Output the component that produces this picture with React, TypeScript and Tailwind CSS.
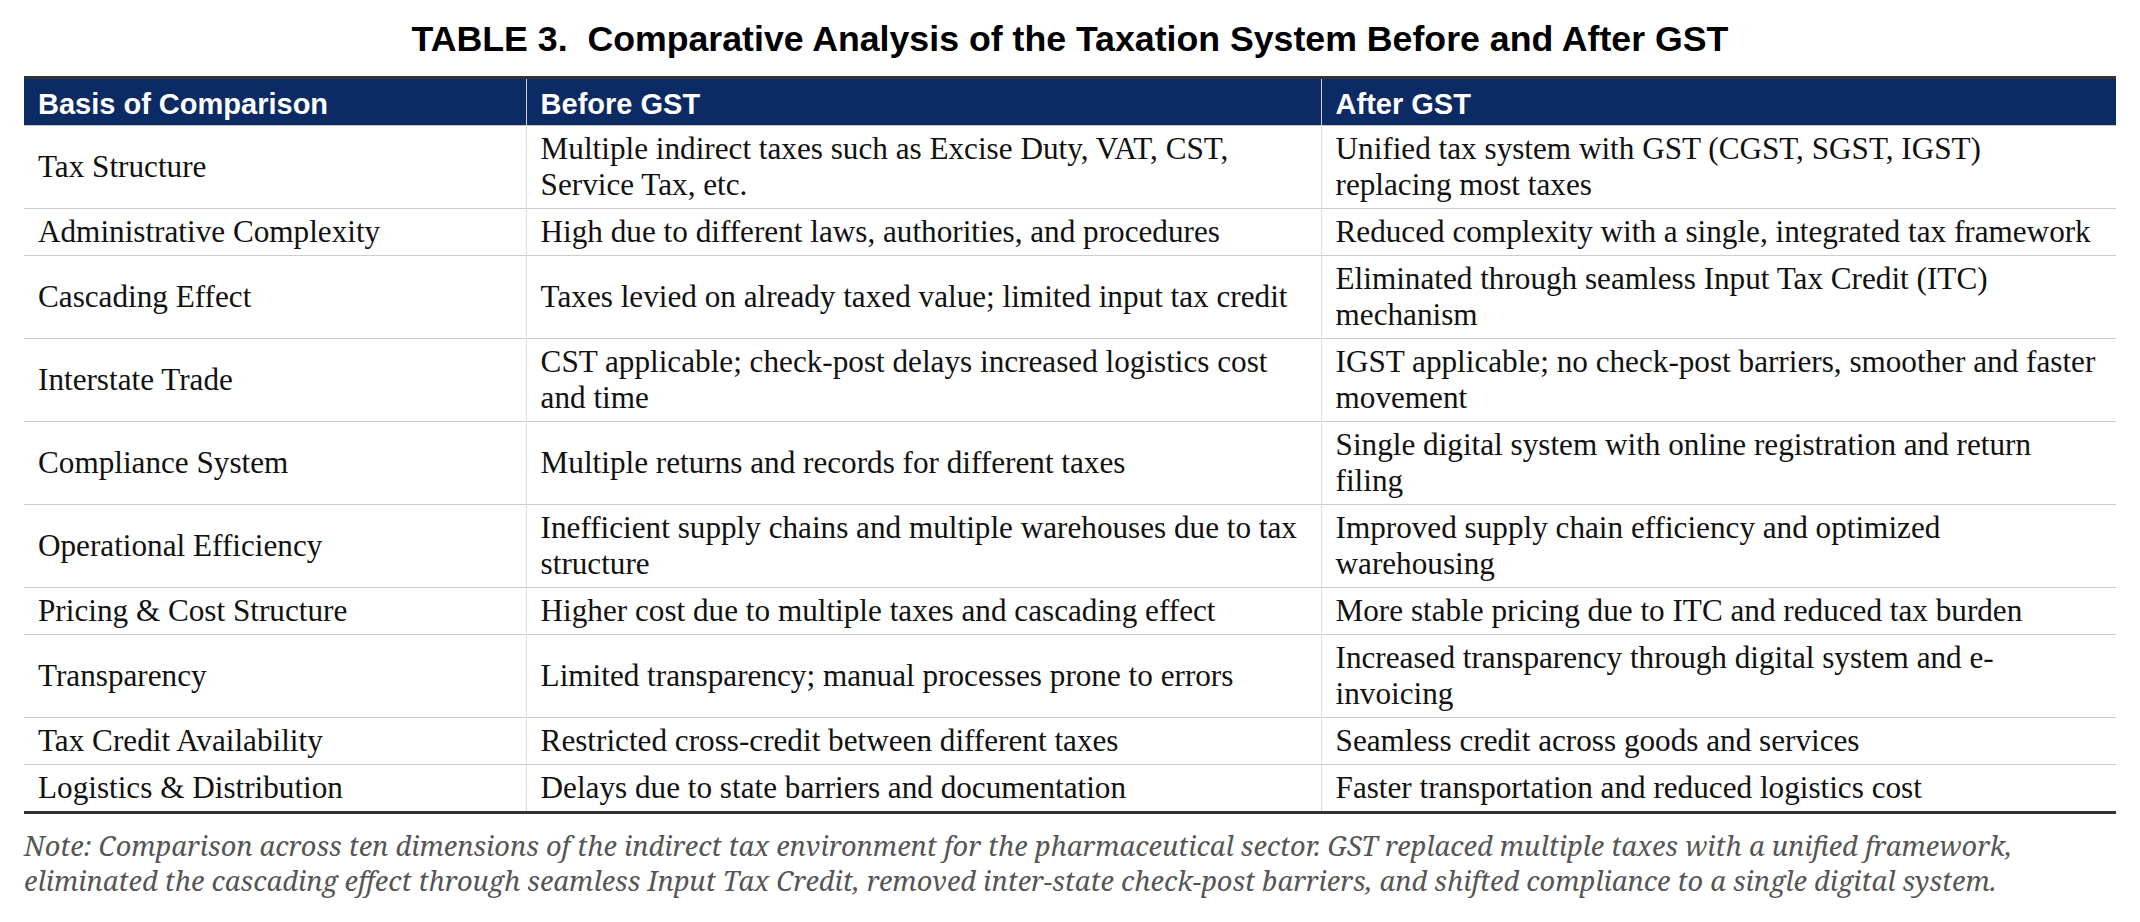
import React from "react";

const rows: [string, string, string][] = [
  ["Tax Structure", "Multiple indirect taxes such as Excise Duty, VAT, CST, Service Tax, etc.", "Unified tax system with GST (CGST, SGST, IGST) replacing most taxes"],
  ["Administrative Complexity", "High due to different laws, authorities, and procedures", "Reduced complexity with a single, integrated tax framework"],
  ["Cascading Effect", "Taxes levied on already taxed value; limited input tax credit", "Eliminated through seamless Input Tax Credit (ITC) mechanism"],
  ["Interstate Trade", "CST applicable; check-post delays increased logistics cost and time", "IGST applicable; no check-post barriers, smoother and faster movement"],
  ["Compliance System", "Multiple returns and records for different taxes", "Single digital system with online registration and return filing"],
  ["Operational Efficiency", "Inefficient supply chains and multiple warehouses due to tax structure", "Improved supply chain efficiency and optimized warehousing"],
  ["Pricing & Cost Structure", "Higher cost due to multiple taxes and cascading effect", "More stable pricing due to ITC and reduced tax burden"],
  ["Transparency", "Limited transparency; manual processes prone to errors", "Increased transparency through digital system and e-invoicing"],
  ["Tax Credit Availability", "Restricted cross-credit between different taxes", "Seamless credit across goods and services"],
  ["Logistics & Distribution", "Delays due to state barriers and documentation", "Faster transportation and reduced logistics cost"],
];

export default function App() {
  return (
    <div className="w-[2140px] h-[922px] bg-white overflow-hidden">
      <h1 className="text-center font-bold text-[35.7px] leading-[42px] pt-[18px] text-black whitespace-pre font-['Liberation_Sans',Arial,sans-serif]">
        {"TABLE 3.  Comparative Analysis of the Taxation System Before and After GST"}
      </h1>
      <div className="px-[24px] mt-[16px]">
        <table className="w-full table-fixed border-collapse border-t-[3px] border-b-[3px] border-[#333333]">
          <colgroup>
            <col className="w-[24%]" />
            <col className="w-[38%]" />
            <col className="w-[38%]" />
          </colgroup>
          <thead>
            <tr className="bg-[#0c2a63] border-b border-[#c4c4c4]">
              {["Basis of Comparison", "Before GST", "After GST"].map((h, i) => (
                <th
                  key={h}
                  className={`text-left text-white font-bold text-[29px] leading-[34px] pt-[8px] pb-[4px] pl-[14px] pr-[16px] font-['Liberation_Sans',Arial,sans-serif] ${i > 0 ? "border-l border-[#d0d4dc]" : ""}`}
                >
                  {h}
                </th>
              ))}
            </tr>
          </thead>
          <tbody>
            {rows.map((r, ri) => (
              <tr key={ri} className={ri < rows.length - 1 ? "border-b border-[#cccccc]" : ""}>
                {r.map((c, ci) => (
                  <td
                    key={ci}
                    className={`align-middle text-[31.2px] leading-[36px] py-[5px] pl-[14px] pr-[16px] text-[#111111] font-['Liberation_Serif','Times_New_Roman',serif] ${ci > 0 ? "border-l border-[#dddddd]" : ""}`}
                  >
                    {c}
                  </td>
                ))}
              </tr>
            ))}
          </tbody>
        </table>
        <p className="mt-[14px] italic text-[27.2px] leading-[35px] text-[#555555] font-['Noto_Serif',serif]">
          Note: Comparison across ten dimensions of the indirect tax environment for the pharmaceutical sector. GST replaced multiple taxes with a unified framework, eliminated the cascading effect through seamless Input Tax Credit, removed inter-state check-post barriers, and shifted compliance to a single digital system.
        </p>
      </div>
    </div>
  );
}
